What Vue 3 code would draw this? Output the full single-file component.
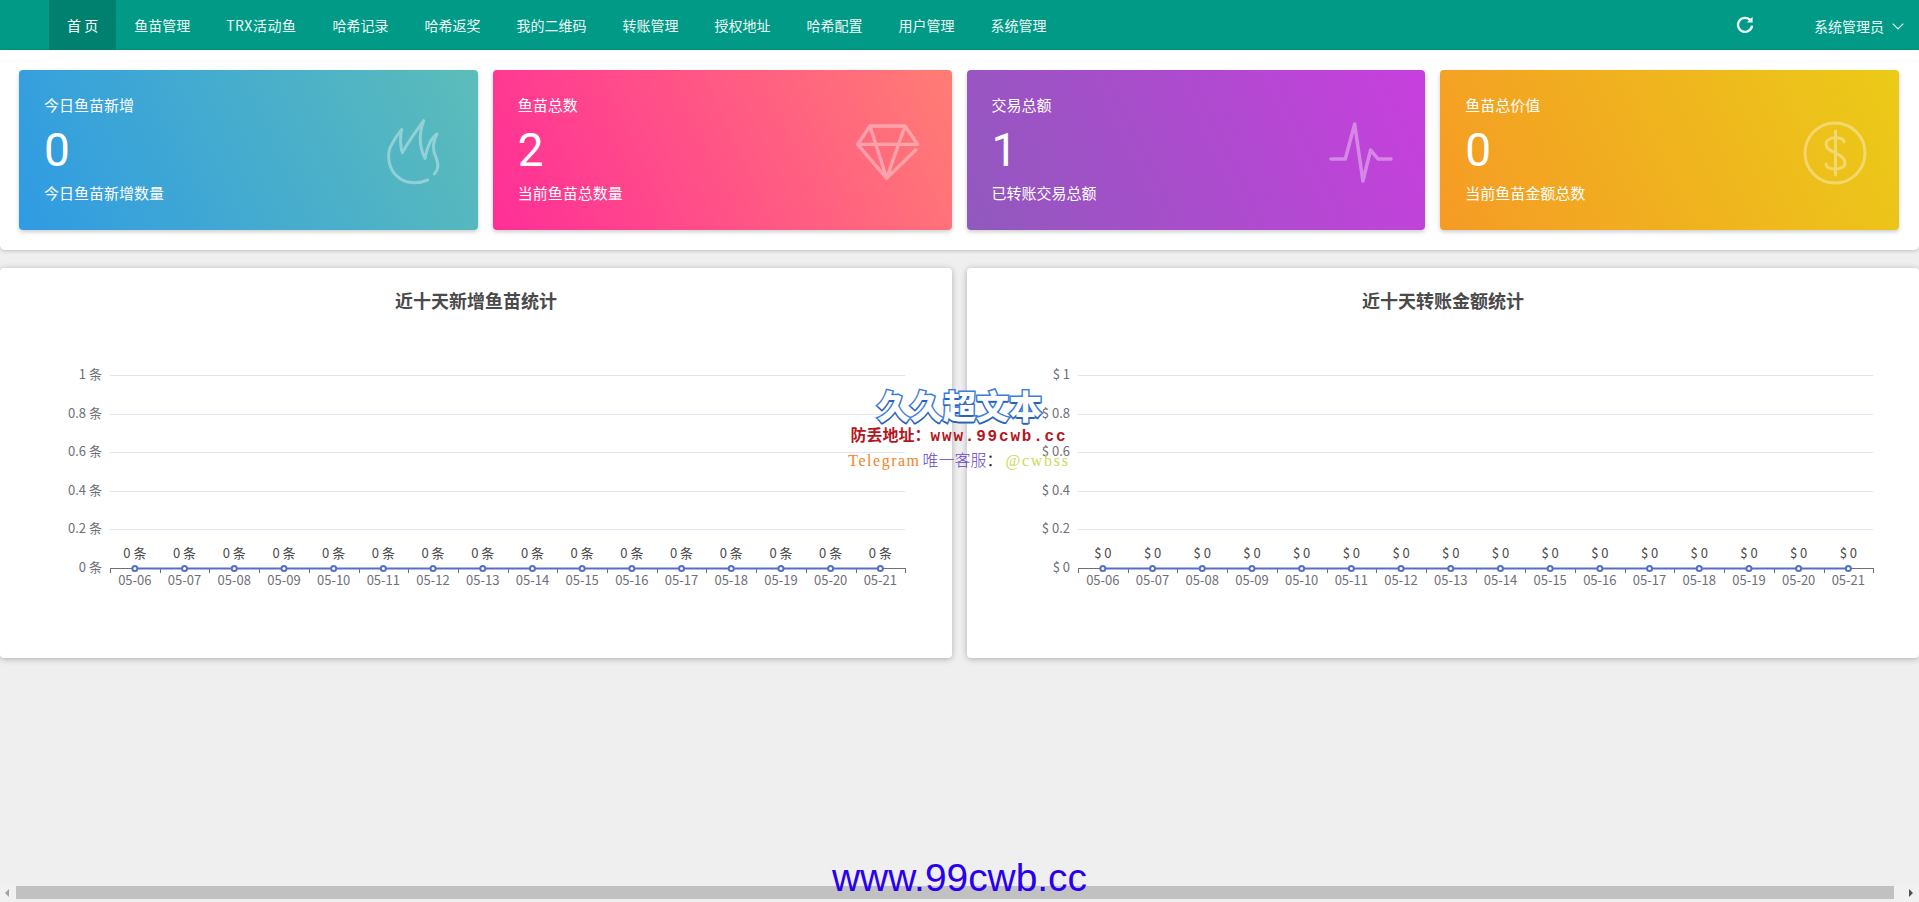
<script setup>
const navItems = ['鱼苗管理', 'TRX活动鱼', '哈希记录', '哈希返奖', '我的二维码', '转账管理', '授权地址', '哈希配置', '用户管理', '系统管理']
const stats = [
  { key: 'blue', title: '今日鱼苗新增', value: '0', sub: '今日鱼苗新增数量' },
  { key: 'pink', title: '鱼苗总数', value: '2', sub: '当前鱼苗总数量' },
  { key: 'purple', title: '交易总额', value: '1', sub: '已转账交易总额' },
  { key: 'orange', title: '鱼苗总价值', value: '0', sub: '当前鱼苗金额总数' }
]
const dates = ['05-06', '05-07', '05-08', '05-09', '05-10', '05-11', '05-12', '05-13', '05-14', '05-15', '05-16', '05-17', '05-18', '05-19', '05-20', '05-21']
const ticks = [
  { v: '1', y: 61 }, { v: '0.8', y: 100 }, { v: '0.6', y: 138 },
  { v: '0.4', y: 177 }, { v: '0.2', y: 215 }, { v: '0', y: 254 }
]
const step = 49.7
const charts = [
  { title: '近十天新增鱼苗统计', x0: 110, fmt: v => `${v} 条` },
  { title: '近十天转账金额统计', x0: 111, fmt: v => `$ ${v}` }
]
</script>

<template>
  <div class="page">
    <nav class="nav">
      <a class="nav-item active">首 页</a>
      <a v-for="n in navItems" :key="n" class="nav-item" :class="{ latin: n.startsWith('TRX') }">{{ n }}</a>
      <div class="nav-right">
        <svg class="refresh" width="18" height="18" viewBox="0 0 18 18">
          <path d="M14.600 4.600A7 7 0 1 0 16 9.600" fill="none" stroke="#eef7f5" stroke-width="2.400" />
          <path d="M10.800 6.600H16.600V0.800Z" fill="#eef7f5" />
        </svg>
        <span class="user">系统管理员</span>
        <svg class="chev" width="12" height="7" viewBox="0 0 12 7">
          <path d="M0.700 0.700 6 6 11.300 0.700" fill="none" stroke="#e4f3f0" stroke-width="1.200" />
        </svg>
      </div>
    </nav>

    <section class="panel">
      <article v-for="s in stats" :key="s.key" class="stat" :class="s.key">
        <div class="stat-text">
          <div class="stat-title">{{ s.title }}</div>
          <div class="stat-value">{{ s.value }}</div>
          <div class="stat-sub">{{ s.sub }}</div>
        </div>
        <svg v-if="s.key === 'blue'" class="icon flame" width="80" height="85" viewBox="0 0 240 255">
          <path d="M158 210C130 222 90 222 68 200C40 178 32 130 52 100C60 85 72 68 80 58C76 80 74 105 82 128C92 110 118 70 146 32C132 70 130 105 150 145C155 120 165 85 186 72C172 100 172 120 184 145C192 165 190 180 178 192" />
        </svg>
        <svg v-else-if="s.key === 'pink'" class="icon gem" width="85" height="75" viewBox="0 0 255 225">
          <path d="M212 105 125 190 38 88 75 33H180L218 88H38M75 33 125 190 180 33" />
        </svg>
        <svg v-else-if="s.key === 'purple'" class="icon pulse" width="70" height="70" viewBox="0 0 70 70">
          <path d="M5 42H19.300L28.700 7 36.900 64 44.600 33 52 42H65" />
        </svg>
        <svg v-else class="icon dollar" width="72" height="72" viewBox="0 0 72 72">
          <circle cx="36" cy="36" r="30" />
          <path d="M36.500 14V58M45 25C45 19 27 19 27 27C27 36 46 36 46 46C46 54 27 54 27 47" />
        </svg>
      </article>
    </section>

    <section class="charts">
      <article v-for="c in charts" :key="c.title" class="chart-card">
        <h3 class="chart-title">{{ c.title }}</h3>
        <svg class="chart" width="100%" height="344">
          <g v-for="t in ticks" :key="t.v">
            <line v-if="t.v !== '0'" :x1="c.x0" :x2="c.x0 + step * 16" :y1="t.y + 0.5" :y2="t.y + 0.5" class="grid" />
            <text :x="c.x0 - 8" :y="t.y + 0.5" text-anchor="end" dominant-baseline="middle" class="axis-label">{{ c.fmt(t.v) }}</text>
          </g>
          <line :x1="c.x0" :x2="c.x0 + step * 16" y1="254.500" y2="254.500" class="axis" />
          <line v-for="i in 17" :key="i" :x1="Math.round(c.x0 + step * (i - 1)) + 0.5" :x2="Math.round(c.x0 + step * (i - 1)) + 0.5" y1="254" y2="259" class="axis" />
          <line :x1="c.x0 + step / 2" :x2="c.x0 + step * 15.5" y1="254.500" y2="254.500" class="series" />
          <g v-for="(d, i) in dates" :key="d">
            <circle :cx="c.x0 + step * (i + 0.5)" cy="254.500" r="2.500" class="dot" />
            <text :x="c.x0 + step * (i + 0.5)" y="240" text-anchor="middle" dominant-baseline="middle" class="data-label">{{ c.fmt('0') }}</text>
            <text :x="c.x0 + step * (i + 0.5)" y="267" text-anchor="middle" dominant-baseline="middle" class="axis-label">{{ d }}</text>
          </g>
        </svg>
      </article>
    </section>

    <div class="scrollbar">
      <div class="sb-btn left"><i class="arrow-left"></i></div>
      <div class="sb-thumb"></div>
      <div class="sb-btn right"><i class="arrow-right"></i></div>
    </div>

    <div class="mark">
      <div class="mark-title">久久超文本</div>
      <div class="mark-url"><span class="cn">防丢地址：</span><span class="mono">www.99cwb.cc</span></div>
      <div class="mark-tg"><span class="tg">Telegram</span><span class="kf">唯一客服</span><span class="col">：</span><span class="at">@cwbss</span></div>
    </div>
    <div class="bottom-url">www.99cwb.cc</div>
  </div>
</template>

<style>
html, body { margin: 0; overflow: hidden; background: #efefef; }
</style>

<style scoped>
.page {
  position: relative;
  width: 1919px;
  height: 902px;
  overflow: hidden;
  background: #efefef;
  font-family: "Noto Sans CJK SC", "Liberation Sans", sans-serif;
}
.nav {
  display: flex;
  height: 50px;
  padding-left: 49px;
  background: #009a87;
  color: #eef8f6;
  font-size: 14px;
  line-height: 50px;
}
.nav-item { padding: 0 18px; white-space: pre; }
.nav-item.latin { letter-spacing: 0.500px; }
.nav-item.active { background: #00806f; color: #fff; }
.nav-right { margin-left: auto; display: flex; align-items: center; }
.refresh { margin-right: 60px; }
.user { width: 70px; font-size: 14px; margin-top: 1px; white-space: nowrap; }
.chev { margin: 3px 15px 0 8px; }

.panel {
  display: flex;
  gap: 15px;
  height: 160px;
  padding: 20px 20px 20px 19px;
  background: #fff;
  border-radius: 0 0 5px 5px;
  box-shadow: 0 1px 4px rgba(0, 0, 0, 0.2);
}
.stat {
  flex: 1;
  display: flex;
  align-items: center;
  padding-left: 25px;
  border-radius: 4px;
  color: #fff;
  box-shadow: 0 2px 4px rgba(0, 0, 0, 0.2);
}
.blue { background: linear-gradient(65deg, #2f9be3, #5cbdb9); }
.pink { background: linear-gradient(65deg, #ff2e97, #ff7d74); }
.purple { background: linear-gradient(65deg, #9059bd, #c83fde); }
.orange { background: linear-gradient(65deg, #f59b25, #ebcb18); }
.stat-text { align-self: flex-start; padding-top: 26px; display: flex; flex-direction: column; }
.stat-title, .stat-sub { font-size: 15px; line-height: 18px; }
.stat-value { margin: 10px 0 8px; font-family: "Roboto", "Liberation Sans", sans-serif; font-size: 46px; line-height: 52px; font-weight: 400; }
.icon { margin-left: auto; fill: none; stroke: rgba(255, 255, 255, 0.36); stroke-linecap: round; stroke-linejoin: round; }
.flame { stroke-width: 9; margin: 5px 23px 0 auto; }
.gem { stroke-width: 10; margin: 5px 22px 0 auto; }
.pulse { stroke-width: 3.500; margin: 4px 29px 0 auto; }
.dollar { stroke-width: 3; margin: 6px 28px 0 auto; }

.charts {
  display: grid;
  grid-template-columns: 952px 952px;
  gap: 15px;
  margin-top: 18px;
}
.chart-card {
  height: 390px;
  background: #fff;
  border-radius: 4px;
  box-shadow: 0 1px 6px rgba(0, 0, 0, 0.28);
}
.chart-title {
  margin: 0;
  padding-top: 19px;
  height: 27px;
  line-height: 26px;
  text-align: center;
  font-size: 18px;
  font-weight: 700;
  color: #4a4a4a;
}
.chart { display: block; }
.grid { stroke: #e0e6f1; stroke-width: 1; }
.axis { stroke: #6e7079; stroke-width: 1; }
.series { stroke: #5470c6; stroke-width: 2; }
.dot { fill: #fff; stroke: #5470c6; stroke-width: 2; }
.axis-label { font-size: 13px; fill: #6e7079; }
.data-label { font-size: 13px; fill: #4a4a4a; }

.scrollbar {
  position: absolute;
  left: 0;
  right: 0;
  bottom: 0;
  height: 18px;
  display: flex;
}
.sb-btn { position: relative; background: #f1f1f1; }
.sb-btn.left { width: 16px; }
.sb-btn.right { width: 25px; }
.sb-thumb { flex: 1; height: 13px; margin-top: 2px; background: #c1c1c1; }
.arrow-left, .arrow-right { position: absolute; top: 5px; width: 0; height: 0; border: 4px solid transparent; }
.arrow-left { left: 1px; border-right-color: #a3a3a3; }
.arrow-right { left: 15px; border-left-color: #505050; }

.mark {
  position: absolute;
  left: 0;
  right: 1px;
  top: 385px;
  display: flex;
  flex-direction: column;
  align-items: center;
  pointer-events: none;
}
.mark-title {
  height: 39px;
  line-height: 40px;
  font-size: 33px;
  font-weight: 900;
  color: #fff;
  margin-right: -1px;
  -webkit-text-stroke: 3px #3b7dd8;
  paint-order: stroke fill;
  text-shadow: 0 2px 0 #2a62b8;
}
.mark-url {
  height: 20px;
  line-height: 20px;
  color: #b5161e;
  font-weight: 700;
  white-space: nowrap;
}
.cn { font-size: 16px; }
.mono { font-family: "Liberation Mono", monospace; font-size: 16px; letter-spacing: 1.800px; }
.mark-tg {
  height: 20px;
  margin-top: 5px;
  line-height: 20px;
  font-size: 16px;
  font-family: "Liberation Serif", "Noto Sans CJK SC", serif;
  white-space: nowrap;
}
.tg { color: #f4822a; letter-spacing: 1.500px; }
.kf { color: #6b3fc4; margin-left: 2px; font-family: "Noto Sans CJK SC", sans-serif; font-weight: 300; }
.col { color: #333; font-family: "Noto Sans CJK SC", sans-serif; }
.at { color: #c9dc5a; letter-spacing: 1.700px; margin-left: 3px; }
.bottom-url {
  position: absolute;
  left: 0;
  right: 0;
  top: 855px;
  text-align: center;
  font-family: "Liberation Sans", sans-serif;
  font-size: 38.900px;
  line-height: 46px;
  color: #2a00f0;
}
</style>
